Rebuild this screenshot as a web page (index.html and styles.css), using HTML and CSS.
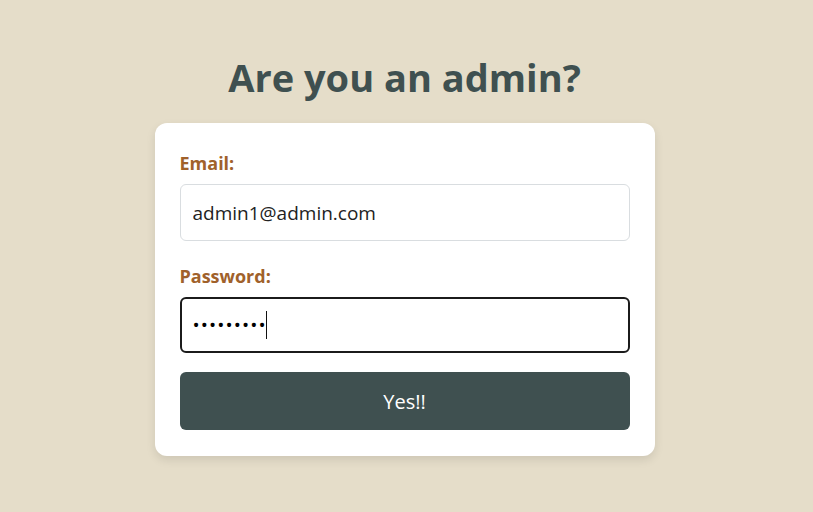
FILE: index.html
```html
<!DOCTYPE html>
<html lang="en">
<head>
<meta charset="utf-8">
<title>Admin login</title>
<link rel="stylesheet" href="styles.css">
</head>
<body>
<main class="page">
  <h1 class="title">Are you an admin?</h1>
  <form class="card">
    <div class="field">
      <label class="label" for="email">Email:</label>
      <input class="input" id="email" type="email" value="admin1@admin.com">
    </div>
    <div class="field">
      <label class="label" for="password">Password:</label>
      <div class="input-wrap">
        <input class="input input-active" id="password" type="password" value="123456789">
        <span class="caret"></span>
      </div>
    </div>
    <button class="button" type="button">Yes!!</button>
  </form>
</main>
</body>
</html>
```
FILE: styles.css
```css
* { box-sizing: border-box; }
html, body { margin: 0; height: 100%; }
body {
  background: #e5ddc9;
  font-family: "Open Sans", "Noto Sans", sans-serif;
}
.page {
  display: flex;
  flex-direction: column;
  align-items: center;
  padding-top: 54px;
  padding-right: 4px;
}
.title {
  margin: 0 0 23px;
  font-size: 38px;
  line-height: 46px;
  font-weight: 700;
  color: #3f5050;
}
.card {
  width: 500px;
  background: #fff;
  border-radius: 12px;
  padding: 25px 25px 26px;
  box-shadow: 0 4px 10px rgba(0,0,0,0.1);
  display: flex;
  flex-direction: column;
  gap: 19px;
}
.field {
  display: flex;
  flex-direction: column;
  gap: 7px;
}
.field + .field { margin-top: 1px; }
.label {
  font-size: 18px;
  line-height: 27px;
  padding-top: 2px;
  font-weight: 700;
  color: #a0612b;
}
.input-wrap {
  position: relative;
  display: flex;
  flex-direction: column;
}
.input {
  height: 57px;
  border: 1px solid #d9dde0;
  border-radius: 6px;
  padding: 0 12px;
  font-family: inherit;
  font-size: 19px;
  color: #222;
  background: #fff;
}
.input-active {
  height: 56px;
  border: 2px solid #1b1b1b;
  padding: 0 11px;
  outline: none;
  letter-spacing: 1.1px;
  color: #000;
}
.input:focus { outline: none; }
.caret {
  position: absolute;
  left: 86px;
  top: 14px;
  width: 1px;
  height: 28px;
  background: #111;
}
.button {
  height: 58px;
  border: 0;
  border-radius: 6px;
  background: #3f5050;
  color: #fff;
  font-family: inherit;
  font-size: 20px;
}
```
